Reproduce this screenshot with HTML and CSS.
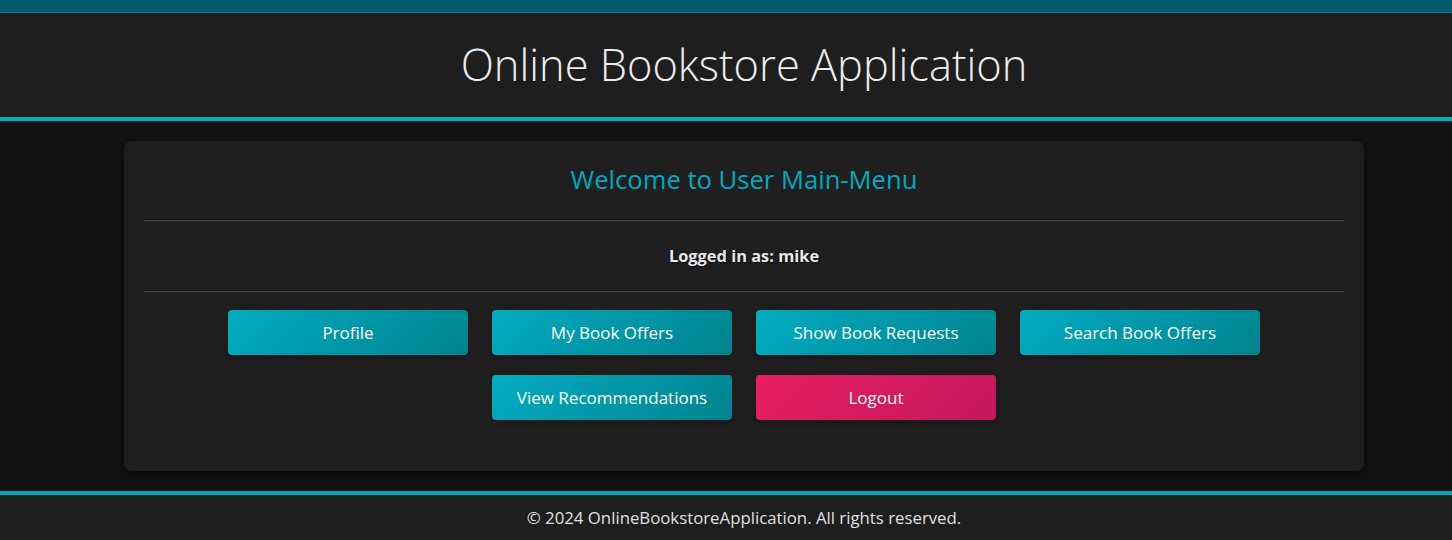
FILE: index.html
```html
<!DOCTYPE html>
<html lang="en">
<head>
<meta charset="utf-8">
<title>Online Bookstore Application</title>
<link rel="stylesheet" href="styles.css">
</head>
<body>
<div class="page">
  <div class="topbar"></div>
  <header class="site-header">
    <h1 class="site-title">Online Bookstore Application</h1>
  </header>
  <main class="main">
    <section class="card">
      <h2 class="card-title">Welcome to User Main-Menu</h2>
      <hr class="divider">
      <p class="user-line">Logged in as: mike</p>
      <hr class="divider">
      <nav class="menu">
        <a class="btn" href="#">Profile</a>
        <a class="btn" href="#">My Book Offers</a>
        <a class="btn" href="#">Show Book Requests</a>
        <a class="btn" href="#">Search Book Offers</a>
        <a class="btn" href="#">View Recommendations</a>
        <a class="btn btn-danger" href="#">Logout</a>
      </nav>
    </section>
  </main>
  <footer class="site-footer">
    <p class="footer-text">© 2024 OnlineBookstoreApplication. All rights reserved.</p>
  </footer>
</div>
</body>
</html>
```
FILE: styles.css
```css
* { box-sizing: border-box; }
html, body { margin: 0; padding: 0; }
body {
  background: #121212;
  color: #e0e0e0;
  font-family: "Open Sans", "Liberation Sans", sans-serif;
  height: 540px;
  overflow: hidden;
}
.page {
  width: 1488px;
}
.topbar {
  height: 13px;
  background: #035c6b;
  border-bottom: 1px solid #1f7d8a;
}
.site-header {
  background: #1e1e1e;
  height: 108px;
  border-bottom: 4px solid #00acc1;
  display: flex;
  align-items: center;
  justify-content: center;
}
.site-title {
  margin: 0;
  font-weight: 300;
  font-size: 43.4px;
  color: #ececec;
  line-height: 1;
}
.main {
  padding: 20px 0;
  display: flex;
  justify-content: center;
}
.card {
  width: 1240px;
  height: 330px;
  background: #1f1f1f;
  border-radius: 8px;
  padding: 20px;
  box-shadow: 0 4px 12px rgba(0,0,0,0.5);
}
.card-title {
  margin: 0;
  height: 36px;
  display: flex;
  align-items: center;
  justify-content: center;
  font-size: 25.6px;
  font-weight: 400;
  color: #00a9c0;
}
.divider {
  margin: 22px 0 0;
  border: 0;
  border-top: 1px solid #0e0e0e;
  border-bottom: 1px solid #474747;
  height: 0;
}
.user-line {
  margin: 23px 0 22px;
  text-align: center;
  font-weight: 700;
  font-size: 16.4px;
  line-height: 24px;
  color: #e8e8e8;
  text-shadow: 1px 1px 2px rgba(0,0,0,0.6);
}
.user-line + .divider { margin-top: 0; }
.menu {
  margin: 18px auto 0;
  width: 1032px;
  display: flex;
  flex-wrap: wrap;
  justify-content: center;
  column-gap: 24px;
  row-gap: 20px;
}
.btn {
  width: 240px;
  height: 45px;
  display: flex;
  align-items: center;
  justify-content: center;
  border-radius: 4px;
  background: linear-gradient(135deg, #00acc1, #00838f);
  color: #ffffff;
  text-decoration: none;
  font-size: 17px;
  font-weight: 500;
  box-shadow: 0 2px 6px rgba(0,0,0,0.35);
}
.btn-danger {
  background: linear-gradient(135deg, #e91e63, #c2185b);
}
.site-footer {
  background: #1e1e1e;
  border-top: 4px solid #00acc1;
  height: 49px;
  display: flex;
  align-items: center;
  justify-content: center;
}
.footer-text {
  margin: 0;
  font-size: 16.8px;
  color: #e0e0e0;
}
```
